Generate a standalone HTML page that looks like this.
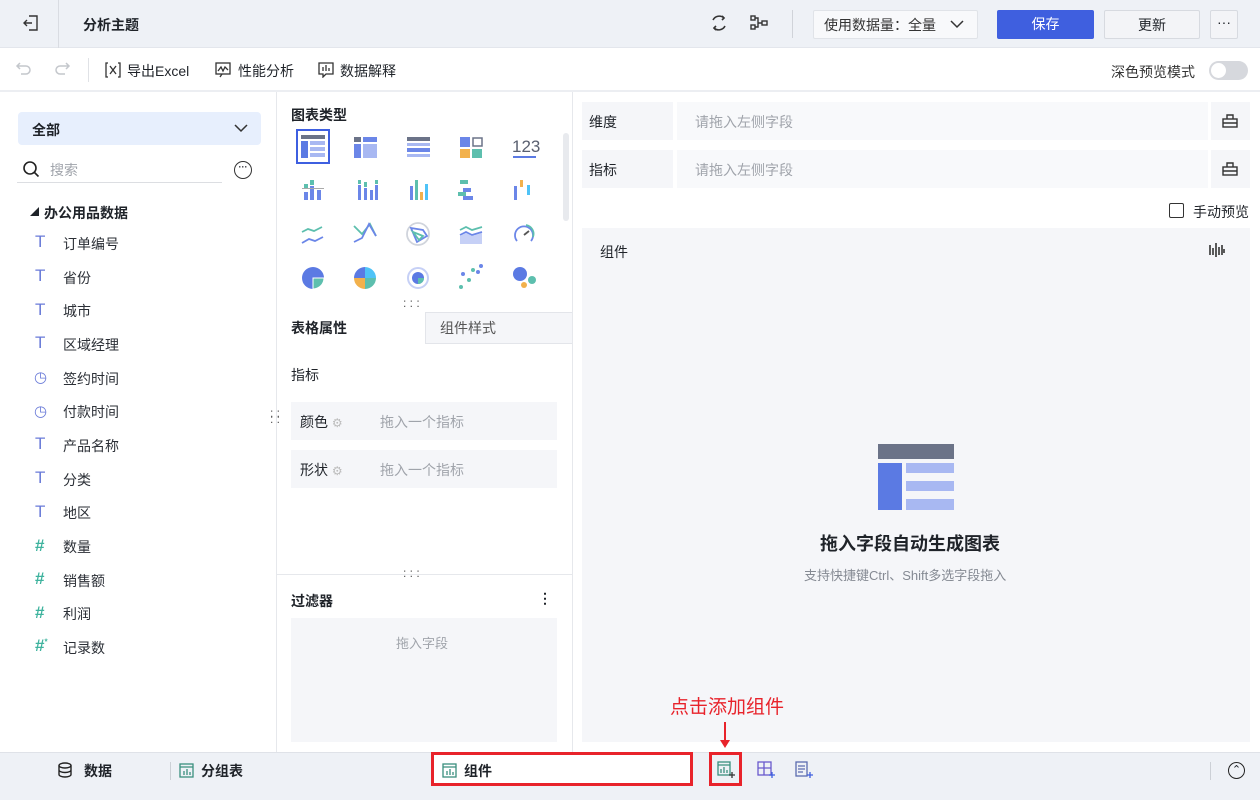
<!DOCTYPE html>
<html><head><meta charset="utf-8"><style>
*{box-sizing:border-box;margin:0;padding:0}
body{width:1260px;height:800px;overflow:hidden;font-family:"Liberation Sans","Noto Sans CJK SC",sans-serif;font-size:14px;color:#1f2329;background:#fff;position:relative}
.a{position:absolute}
.top{left:0;top:0;width:1260px;height:48px;background:#eef1f6;border-bottom:1px solid #e3e6ec}
.tb{left:0;top:48px;width:1260px;height:44px;background:#fff;border-bottom:2px solid #eceef2}
.t{position:absolute;white-space:nowrap}
.gray{color:#a0a4ab}
.btn{position:absolute;border-radius:2px;text-align:center;line-height:28px}
.lst .t{font-size:14px;color:#2b2f36}
.ic{position:absolute;color:#6a7bd8;font-size:17px}
.gr{color:#3fb39e}
</style></head><body>
<div class="a top"></div>
<svg class="a" style="left:22px;top:14px" width="18" height="18" viewBox="0 0 18 18" fill="none" stroke="#333" stroke-width="1.4"><path d="M7 2h8v14H7M2 9h8M5 6l-3 3 3 3"/></svg>
<div class="a" style="left:58px;top:0;width:1px;height:48px;background:#d9dce2"></div>
<div class="t" style="left:83px;top:15px;font-weight:bold;font-size:14px">分析主题</div>
<svg class="a" style="left:709px;top:13px" width="20" height="20" viewBox="0 0 20 20" fill="none" stroke="#333" stroke-width="1.6"><path d="M4 7a7 7 0 0 1 11-2M16 13a7 7 0 0 1-11 2"/><path d="M13 3l2 2-2 2M7 17l-2-2 2-2"/></svg>
<svg class="a" style="left:749px;top:14px" width="20" height="18" viewBox="0 0 20 18" fill="none" stroke="#333" stroke-width="1.4"><rect x="2" y="2" width="4" height="4"/><rect x="2" y="11" width="4" height="4"/><rect x="13" y="7" width="5" height="4"/><path d="M6 4h3v9H6M9 9h4"/></svg>
<div class="a" style="left:792px;top:10px;width:1px;height:28px;background:#d0d3d9"></div>
<div class="btn" style="left:813px;top:10px;width:165px;height:29px;background:#f8f9fb;border:1px solid #e0e3e8;text-align:left;padding-left:10px;color:#333">使用数据量：全量</div>
<svg class="a" style="left:950px;top:19px" width="14" height="10" viewBox="0 0 14 10" fill="none" stroke="#333" stroke-width="1.5"><path d="M1 2l6 6 6-6"/></svg>
<div class="btn" style="left:997px;top:10px;width:97px;height:29px;background:#3f5fdf;color:#fff">保存</div>
<div class="btn" style="left:1104px;top:10px;width:96px;height:29px;background:#f3f4f7;border:1px solid #d7dae0">更新</div>
<div class="btn" style="left:1210px;top:10px;width:28px;height:29px;background:#f3f4f7;border:1px solid #d7dae0;line-height:22px">···</div>

<div class="a tb"></div>
<svg class="a" style="left:15px;top:61px" width="18" height="16" viewBox="0 0 18 16" fill="none" stroke="#c4c7cc" stroke-width="1.5"><path d="M5 2L2 5l3 3M2 5h9a4 4 0 0 1 0 8H6"/></svg>
<svg class="a" style="left:53px;top:61px" width="18" height="16" viewBox="0 0 18 16" fill="none" stroke="#c4c7cc" stroke-width="1.5"><path d="M13 2l3 3-3 3M16 5H7a4 4 0 0 0 0 8h5"/></svg>
<div class="a" style="left:88px;top:58px;width:1px;height:24px;background:#e0e2e6"></div>
<svg class="a" style="left:105px;top:62px" width="16" height="16" viewBox="0 0 16 16" fill="none" stroke="#333" stroke-width="1.3"><path d="M3 1h-2v14h2M13 1h2v14h-2"/><path d="M5 4l6 8M11 4l-6 8"/></svg>
<div class="t" style="left:127px;top:61px">导出Excel</div>
<svg class="a" style="left:215px;top:62px" width="16" height="16" viewBox="0 0 16 16" fill="none" stroke="#333" stroke-width="1.3"><rect x="1" y="1" width="14" height="11"/><path d="M3 9l3-4 2 4 2-4 3 3M5 15l2-3"/></svg>
<div class="t" style="left:238px;top:61px">性能分析</div>
<svg class="a" style="left:318px;top:62px" width="16" height="16" viewBox="0 0 16 16" fill="none" stroke="#333" stroke-width="1.3"><path d="M1 1h14v11H8l-3 3v-3H1z"/><path d="M5 5v4M8 3v6M11 6v3"/></svg>
<div class="t" style="left:340px;top:61px">数据解释</div>
<div class="t" style="left:1111px;top:62px;color:#333">深色预览模式</div>
<div class="a" style="left:1209px;top:61px;width:39px;height:19px;border-radius:10px;background:#d6d8dd"><div class="a" style="left:2px;top:2px;width:15px;height:15px;border-radius:50%;background:#fff"></div></div>

<!-- left -->
<div class="a" style="left:276px;top:92px;width:1px;height:660px;background:#e6e8ec"></div>
<div class="a" style="left:18px;top:112px;width:243px;height:33px;background:#e7effd;border-radius:4px"></div>
<div class="t" style="left:32px;top:120px;font-weight:bold">全部</div>
<svg class="a" style="left:234px;top:123px" width="14" height="10" viewBox="0 0 14 10" fill="none" stroke="#333" stroke-width="1.5"><path d="M1 2l6 6 6-6"/></svg>
<svg class="a" style="left:22px;top:160px" width="18" height="18" viewBox="0 0 18 18" fill="none" stroke="#222" stroke-width="1.6"><circle cx="8" cy="8" r="6"/><path d="M12.5 12.5l4 4"/></svg>
<div class="t gray" style="left:50px;top:160px">搜索</div>
<div class="a" style="left:17px;top:182px;width:205px;height:1px;background:#dcdee2"></div>
<div class="a" style="left:234px;top:161px;width:18px;height:18px;border:1.5px solid #333;border-radius:50%;font-size:9px;line-height:10px;text-align:center;font-weight:bold">···</div>
<div class="t" style="left:30px;top:205px;font-size:9px">&#9698;</div>
<div class="t" style="left:44px;top:203px;font-weight:bold">办公用品数据</div>
<div class="lst">
<div class="ic" style="left:35px;top:232px">T</div><div class="t" style="left:63px;top:234px">订单编号</div>
<div class="ic" style="left:35px;top:266px">T</div><div class="t" style="left:63px;top:268px">省份</div>
<div class="ic" style="left:35px;top:300px">T</div><div class="t" style="left:63px;top:301px">城市</div>
<div class="ic" style="left:35px;top:333px">T</div><div class="t" style="left:63px;top:335px">区域经理</div>
<div class="ic" style="left:34px;top:368px;font-size:15px">&#9719;</div><div class="t" style="left:63px;top:369px">签约时间</div>
<div class="ic" style="left:34px;top:402px;font-size:15px">&#9719;</div><div class="t" style="left:63px;top:402px">付款时间</div>
<div class="ic" style="left:35px;top:434px">T</div><div class="t" style="left:63px;top:436px">产品名称</div>
<div class="ic" style="left:35px;top:468px">T</div><div class="t" style="left:63px;top:470px">分类</div>
<div class="ic" style="left:35px;top:502px">T</div><div class="t" style="left:63px;top:503px">地区</div>
<div class="ic gr" style="left:35px;top:536px;font-weight:bold">#</div><div class="t" style="left:63px;top:537px">数量</div>
<div class="ic gr" style="left:35px;top:569px;font-weight:bold">#</div><div class="t" style="left:63px;top:571px">销售额</div>
<div class="ic gr" style="left:35px;top:603px;font-weight:bold">#</div><div class="t" style="left:63px;top:604px">利润</div>
<div class="ic gr" style="left:35px;top:636px;font-weight:bold">#<sup style="font-size:8px">*</sup></div><div class="t" style="left:63px;top:638px">记录数</div>
</div>
<div class="t" style="left:270px;top:410px;font-size:12px;color:#555;line-height:6px">: :<br>: :</div>

<!-- middle -->
<div class="a" style="left:572px;top:92px;width:1px;height:660px;background:#e6e8ec"></div>
<div class="t" style="left:291px;top:105px;font-weight:bold">图表类型</div>
<svg class="a" style="left:280px;top:128px" width="280" height="170" viewBox="280 128 280 170">
<rect x="297" y="130" width="32" height="33" fill="none" stroke="#3e5fe0" stroke-width="2"/>
<rect x="301" y="135" width="24" height="4" fill="#6b7388"/><rect x="301" y="141" width="7" height="17" fill="#5b7ae3"/><rect x="310" y="141" width="15" height="4" fill="#a8b8f2"/><rect x="310" y="147" width="15" height="4" fill="#a8b8f2"/><rect x="310" y="153" width="15" height="4" fill="#a8b8f2"/>
<rect x="354" y="137" width="7" height="5" fill="#6b7388"/><rect x="363" y="137" width="14" height="5" fill="#6b86e8"/><rect x="354" y="144" width="7" height="14" fill="#6b86e8"/><rect x="363" y="144" width="14" height="14" fill="#a8b8f2"/>
<rect x="407" y="137" width="23" height="4" fill="#6b7388"/><rect x="407" y="143" width="23" height="3" fill="#a8b8f2"/><rect x="407" y="148" width="23" height="4" fill="#6b86e8"/><rect x="407" y="154" width="23" height="3" fill="#a8b8f2"/>
<rect x="460" y="137" width="10" height="10" fill="#6b86e8"/><rect x="473" y="138" width="9" height="8" fill="none" stroke="#6b7388" stroke-width="1.5"/><rect x="460" y="149" width="10" height="9" fill="#f2b14c"/><rect x="472" y="149" width="10" height="9" fill="#5dbfae"/>
<text x="512" y="152" font-size="17" fill="#5a6070" font-family="Liberation Sans">123</text><rect x="513" y="156" width="23" height="2" fill="#5b7ae3"/>
<g fill="#6b86e8"><rect x="304" y="192" width="4" height="8"/><rect x="310" y="186" width="4" height="14"/><rect x="317" y="190" width="4" height="10"/><rect x="358" y="185" width="3" height="15"/><rect x="364" y="188" width="3" height="12"/><rect x="370" y="190" width="3" height="10"/><rect x="375" y="185" width="3" height="15"/><rect x="410" y="186" width="3" height="14"/><rect x="463" y="188" width="8" height="4"/><rect x="463" y="196" width="10" height="4"/><rect x="514" y="186" width="3" height="14"/></g>
<g fill="#5dbfae"><rect x="310" y="180" width="4" height="5"/><rect x="304" y="184" width="4" height="4"/><rect x="358" y="180" width="3" height="4"/><rect x="364" y="182" width="3" height="5"/><rect x="375" y="180" width="3" height="4"/><rect x="415" y="180" width="3" height="20"/><rect x="460" y="180" width="8" height="4"/><rect x="458" y="192" width="8" height="4"/></g>
<rect x="420" y="192" width="3" height="8" fill="#f2b14c"/><rect x="425" y="184" width="3" height="16" fill="#4fc3f7"/><rect x="520" y="180" width="3" height="7" fill="#f2b14c"/><rect x="527" y="185" width="3" height="10" fill="#4fc3f7"/><rect x="302" y="188" width="22" height="1" fill="#aaa"/>
<g fill="none" stroke-width="1.8"><path d="M302 232l6-3 6 2 8-4" stroke="#5dbfae"/><path d="M302 243l7-4 6 2 8-4" stroke="#6b86e8"/><path d="M354 226l8 8 8-10 6 12" stroke="#5dbfae"/><path d="M354 242l8-4 7-14 7 12" stroke="#6b86e8"/>
<circle cx="418" cy="234" r="11" stroke="#d0d4dc"/><path d="M411 228l12 2 4 6-10 6z" stroke="#6b86e8"/><path d="M413 232l10 4-4 4z" stroke="#5dbfae"/>
<path d="M460 230l6-3 6 3 10-3" stroke="#5dbfae"/><path d="M460 235l6-3 6 3 10-3" stroke="#6b86e8"/>
<path d="M517 241a9 9 0 1 1 14 0" stroke="#6b86e8"/><path d="M526 225a9 9 0 0 1 7 12" stroke="#5dbfae"/><path d="M524 235l5-4" stroke="#555"/></g>
<path d="M460 236l6-3 6 3 10-3v11h-22z" fill="#c6d0f6"/>
<circle cx="313" cy="278" r="11" fill="#5b7ae3"/><path d="M313 278h11a11 11 0 0 1-11 11z" fill="#5dbfae" stroke="#fff"/>
<path d="M365 278v-11a11 11 0 0 0-11 11z" fill="#5b7ae3"/><path d="M365 278v-11a11 11 0 0 1 11 11z" fill="#4fc3f7"/><path d="M365 278h-11a11 11 0 0 0 11 11z" fill="#f2b14c"/><path d="M365 278h11a11 11 0 0 1-11 11z" fill="#5dbfae"/>
<circle cx="418" cy="278" r="10" fill="none" stroke="#c6d0f6" stroke-width="2"/><circle cx="418" cy="278" r="6" fill="#5b7ae3"/><path d="M418 278h6a6 6 0 0 1-6 6z" fill="#5dbfae"/>
<g fill="#6b86e8"><circle cx="463" cy="274" r="2"/><circle cx="478" cy="272" r="2"/><circle cx="481" cy="266" r="2"/></g><g fill="#5dbfae"><circle cx="461" cy="287" r="2"/><circle cx="469" cy="280" r="2"/><circle cx="473" cy="270" r="2"/></g>
<circle cx="520" cy="274" r="7" fill="#5b7ae3"/><circle cx="532" cy="280" r="4" fill="#5dbfae"/><circle cx="524" cy="285" r="3" fill="#f2b14c"/>
</svg>
<div class="a" style="left:563px;top:133px;width:6px;height:88px;background:#e8eaee;border-radius:3px"></div>
<div class="t" style="left:403px;top:300px;font-size:12px;color:#555;line-height:6px">: : :</div>
<div class="a" style="left:425px;top:312px;width:147px;height:32px;background:#f5f6f9;border:1px solid #e3e5ea;border-right:0"></div>
<div class="t" style="left:291px;top:318px;font-weight:bold">表格属性</div>
<div class="t" style="left:440px;top:318px;color:#555">组件样式</div>
<div class="t" style="left:291px;top:365px">指标</div>
<div class="a" style="left:291px;top:402px;width:266px;height:38px;background:#f5f6f9"></div>
<div class="t" style="left:300px;top:412px">颜色 <span style="color:#bbb;font-size:12px">&#9881;</span></div>
<div class="t" style="left:380px;top:412px;color:#a0a4ab">拖入一个指标</div>
<div class="a" style="left:291px;top:450px;width:266px;height:38px;background:#f5f6f9"></div>
<div class="t" style="left:300px;top:460px">形状 <span style="color:#bbb;font-size:12px">&#9881;</span></div>
<div class="t" style="left:380px;top:460px;color:#a0a4ab">拖入一个指标</div>
<div class="a" style="left:277px;top:574px;width:295px;height:1px;background:#e6e8ec"></div>
<div class="t" style="left:403px;top:566px;font-size:12px;color:#555">: : :</div>
<div class="t" style="left:291px;top:591px;font-weight:bold">过滤器</div>
<div class="t" style="left:538px;top:590px;font-weight:bold">&#8942;</div>
<div class="a" style="left:291px;top:618px;width:266px;height:124px;background:#f5f6f9"></div>
<div class="t" style="left:396px;top:633px;color:#a0a4ab;font-size:13px">拖入字段</div>

<!-- right -->
<div class="a" style="left:582px;top:102px;width:91px;height:38px;background:#f5f6f9"></div>
<div class="a" style="left:677px;top:102px;width:531px;height:38px;background:#f8f9fb"></div>
<div class="a" style="left:1211px;top:102px;width:39px;height:38px;background:#f5f6f9"></div>
<div class="t" style="left:589px;top:112px">维度</div><div class="t gray" style="left:695px;top:112px">请拖入左侧字段</div>
<div class="a" style="left:582px;top:150px;width:91px;height:38px;background:#f5f6f9"></div>
<div class="a" style="left:677px;top:150px;width:531px;height:38px;background:#f8f9fb"></div>
<div class="a" style="left:1211px;top:150px;width:39px;height:38px;background:#f5f6f9"></div>
<div class="t" style="left:589px;top:160px">指标</div><div class="t gray" style="left:695px;top:160px">请拖入左侧字段</div>
<svg class="a" style="left:1222px;top:113px" width="16" height="16" viewBox="0 0 16 16" fill="none" stroke="#333" stroke-width="1.4"><rect x="1" y="6" width="14" height="8"/><path d="M5 6V2h6v4M1 10h14"/></svg>
<svg class="a" style="left:1222px;top:161px" width="16" height="16" viewBox="0 0 16 16" fill="none" stroke="#333" stroke-width="1.4"><rect x="1" y="6" width="14" height="8"/><path d="M5 6V2h6v4M1 10h14"/></svg>
<div class="a" style="left:1169px;top:203px;width:15px;height:15px;border:1.5px solid #333;border-radius:2px"></div>
<div class="t" style="left:1193px;top:202px">手动预览</div>
<div class="a" style="left:582px;top:228px;width:668px;height:514px;background:#f5f6f9"></div>
<div class="t" style="left:600px;top:242px">组件</div>
<svg class="a" style="left:1209px;top:242px" width="16" height="16" viewBox="0 0 16 16" stroke="#333" stroke-width="1.6"><path d="M1 3v10M4 6v7M7 1v14M10 5v8M13 3v10M15 7v4"/></svg>
<svg class="a" style="left:878px;top:444px" width="76" height="66" viewBox="0 0 76 66"><rect width="76" height="15" fill="#6b7388"/><rect y="19" width="24" height="47" fill="#5b7ae3"/><rect x="28" y="19" width="48" height="10" fill="#a8b8f2"/><rect x="28" y="37" width="48" height="10" fill="#a8b8f2"/><rect x="28" y="55" width="48" height="11" fill="#a8b8f2"/></svg>
<div class="t" style="left:820px;top:530px;font-size:18px;font-weight:bold">拖入字段自动生成图表</div>
<div class="t" style="left:804px;top:565px;font-size:13px;color:#858a93">支持快捷键Ctrl、Shift多选字段拖入</div>

<!-- annotation -->
<div class="t" style="left:670px;top:692px;font-size:19px;color:#e8232b">点击添加组件</div>
<div class="a" style="left:724px;top:722px;width:2px;height:22px;background:#e8232b"></div>
<div class="a" style="left:720px;top:740px;border-left:5px solid transparent;border-right:5px solid transparent;border-top:8px solid #e8232b"></div>

<!-- bottom -->
<div class="a" style="left:0;top:752px;width:1260px;height:48px;background:#eef1f6;border-top:1px solid #dfe2e8"></div>
<svg class="a" style="left:57px;top:762px" width="16" height="16" viewBox="0 0 16 16" fill="none" stroke="#222" stroke-width="1.4"><ellipse cx="8" cy="3.5" rx="6" ry="2.5"/><path d="M2 3.5v9c0 1.4 2.7 2.5 6 2.5s6-1.1 6-2.5v-9M2 8c0 1.4 2.7 2.5 6 2.5S14 9.4 14 8"/></svg>
<div class="t" style="left:84px;top:761px;font-weight:bold">数据</div>
<div class="a" style="left:170px;top:762px;width:1px;height:18px;background:#ccd0d6"></div>
<svg class="a" style="left:179px;top:763px" width="15" height="15" viewBox="0 0 15 15" fill="none" stroke="#3a8f7e" stroke-width="1.3"><rect x="1" y="1" width="13" height="13"/><path d="M1 4h13M5 12V8M8 12V6M11 12V9"/></svg>
<div class="t" style="left:201px;top:761px;font-weight:bold">分组表</div>
<div class="a" style="left:431px;top:752px;width:262px;height:34px;background:#fff;border:3px solid #e8232b"></div>
<svg class="a" style="left:442px;top:763px" width="15" height="15" viewBox="0 0 15 15" fill="none" stroke="#3a8f7e" stroke-width="1.3"><rect x="1" y="1" width="13" height="13"/><path d="M1 4h13M5 12V8M8 12V6M11 12V9"/></svg>
<div class="t" style="left:464px;top:761px;font-weight:bold">组件</div>
<div class="a" style="left:709px;top:752px;width:33px;height:34px;border:3px solid #e8232b"></div>
<svg class="a" style="left:717px;top:761px" width="18" height="18" viewBox="0 0 18 18" fill="none" stroke="#3a8f7e" stroke-width="1.3"><rect x="1" y="1" width="12" height="13"/><path d="M1 4h12M4 12V8M7 12V6M10 12V9"/><path d="M15 11v6M12 14h6" stroke="#333"/></svg>
<svg class="a" style="left:757px;top:761px" width="18" height="18" viewBox="0 0 18 18" fill="none" stroke="#6a5acd" stroke-width="1.3"><rect x="1" y="1" width="13" height="13"/><path d="M1 7h13M7 1v13"/><path d="M15 11v6M12 14h6" stroke="#3f5fdf"/></svg>
<svg class="a" style="left:795px;top:761px" width="18" height="18" viewBox="0 0 18 18" fill="none" stroke="#5b6bb0" stroke-width="1.3"><rect x="1" y="1" width="11" height="14"/><path d="M3 5h7M3 8h7M3 11h5"/><path d="M15 11v6M12 14h6" stroke="#3f5fdf"/></svg>
<div class="a" style="left:1210px;top:762px;width:1px;height:18px;background:#ccd0d6"></div>
<div class="a" style="left:1228px;top:762px;width:17px;height:17px;border:1.5px solid #222;border-radius:50%;text-align:center;font-size:11px;line-height:14px">&#8963;</div>
</body></html>
